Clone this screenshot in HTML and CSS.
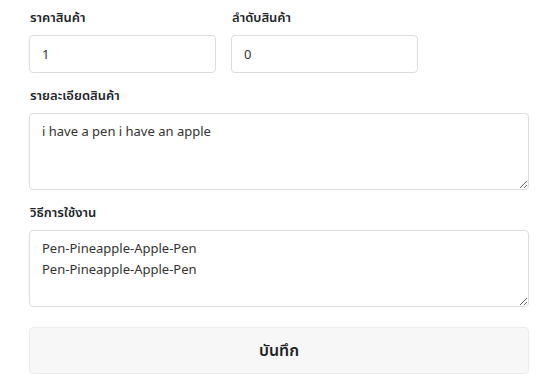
FILE: index.html
```html
<!DOCTYPE html>
<html><head><meta charset="utf-8"/>
<meta name="viewport" content="width=device-width, initial-scale=1.0"/>
<title>สินค้า</title>
<link rel="stylesheet" href="styles.css">
</head>
<body>

<form class="product-form">
	<div class="row">
		<div class="field">
			<label for="price">ราคาสินค้า</label>
			<input id="price" type="text" value="1">
		</div>
		<div class="field">
			<label for="order">ลำดับสินค้า</label>
			<input id="order" type="text" value="0">
		</div>
	</div>
	<div class="field">
		<label for="detail">รายละเอียดสินค้า</label>
		<textarea id="detail">i have a pen i have an apple</textarea>
	</div>
	<div class="field">
		<label for="usage">วิธีการใช้งาน</label>
		<textarea id="usage">Pen-Pineapple-Apple-Pen
Pen-Pineapple-Apple-Pen</textarea>
	</div>
	<button type="button" class="save">บันทึก</button>
</form>

</body>
</html>
```

FILE: styles.css
```css
body {
	margin: 0;
	font-family: "Noto Sans", "Noto Sans Thai", "DejaVu Sans", sans-serif;
	color: #212529;
	background: #fff;
}
.product-form {
	width: 500px;
	padding: 7px 0 0 29px;
	display: flex;
	flex-direction: column;
}
.row {
	display: flex;
	gap: 15px;
}
.row .field {
	width: 187px;
}
.field {
	display: flex;
	flex-direction: column;
	margin-bottom: 12px;
}
.field label {
	font-size: 13px;
	font-weight: 600;
	line-height: 20px;
	margin: 0 0 8px 1px;
}
.field input,
.field textarea {
	font-family: inherit;
	font-size: 13px;
	color: #333;
	border: 1px solid #dcdcdc;
	border-radius: 4px;
	box-sizing: border-box;
	outline: none;
}
.field input {
	height: 38px;
	padding: 0 12px;
}
.field textarea {
	height: 77px;
	padding: 7px 12px;
	line-height: 21px;
	resize: vertical;
}
.save {
	margin-top: 8px;
	height: 47px;
	font-family: inherit;
	font-size: 16px;
	font-weight: 600;
	color: #222;
	background: #f7f7f7;
	border: 1px solid #ececec;
	border-radius: 4px;
}
```
